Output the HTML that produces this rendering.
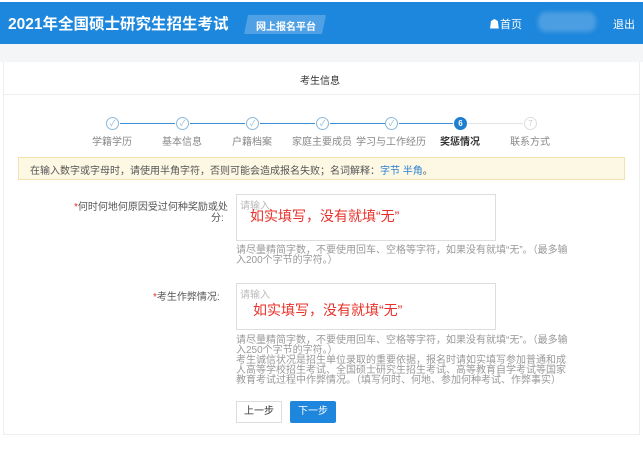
<!DOCTYPE html>
<html><head><meta charset="utf-8"><style>
*{margin:0;padding:0;box-sizing:border-box}
body{width:643px;height:451px;background:#fff;font-family:"Liberation Sans","Noto Sans CJK SC",sans-serif;position:relative;overflow:hidden}
.a{position:absolute;white-space:nowrap}
.hdr{position:absolute;left:0;top:2px;width:643px;height:42px;background:#1c87dc}
.gray{position:absolute;left:0;top:44px;width:643px;height:18px;background:#f4f5f6}
.card{position:absolute;left:3px;top:62px;width:637px;height:373px;background:#fff;border-left:1px solid #eee;border-right:1px solid #eee;border-bottom:1px solid #eee}
.circ{position:absolute;width:13px;height:13px;border-radius:50%;border:1px solid #8ab8dc;background:#fff;color:#8ab8dc;font-size:8px;text-align:center;line-height:11px}
.line{position:absolute;height:1px;background:#3a8fd8;top:123px}
.lbl{position:absolute;top:133px;font-size:10px;color:#888;transform:translateX(-50%);white-space:nowrap}
.ta{position:absolute;border:1px solid #ddd;background:#fff}
.ph{position:absolute;font-size:10px;color:#bbb}
.red{position:absolute;font-size:14px;color:#e8302a;white-space:nowrap}
.help{position:absolute;font-size:10px;color:#999;line-height:10px;width:338px}
</style></head><body>
<div class="hdr"></div>
<div class="a" style="left:8px;top:12px;font-size:15.5px;font-weight:bold;color:#fff">2021年全国硕士研究生招生考试</div>
<div class="a" style="left:246px;top:15px;width:78px;height:19px;background:#4fa0e4;transform:skewX(-12deg)"></div>
<div class="a" style="left:256px;top:18px;font-size:10px;font-weight:bold;color:#fff">网上报名平台</div>
<div class="a" style="left:489px;top:16px;font-size:11px;color:#fff">&#9751;首页</div>
<div class="a" style="left:538px;top:12px;width:58px;height:20px;border-radius:8px;background:#4c9ee2;filter:blur(2px)"></div>
<div class="a" style="left:613px;top:16px;font-size:11px;color:#fff">退出</div>
<div class="gray"></div>
<div class="card"></div>
<div class="a" style="left:300px;top:72px;font-size:10px;color:#333">考生信息</div>
<div class="a" style="left:3px;top:94px;width:637px;height:1px;background:#eee"></div>

<div class="line" style="left:120px;width:55px"></div>
<div class="line" style="left:190px;width:55px"></div>
<div class="line" style="left:260px;width:55px"></div>
<div class="line" style="left:330px;width:55px"></div>
<div class="line" style="left:399px;width:54px"></div>
<div class="line" style="left:468px;width:55px;background:#e4e4e4"></div>
<div class="circ" style="left:106px;top:117px">✓</div>
<div class="circ" style="left:176px;top:117px">✓</div>
<div class="circ" style="left:246px;top:117px">✓</div>
<div class="circ" style="left:316px;top:117px">✓</div>
<div class="circ" style="left:385px;top:117px">✓</div>
<div class="circ" style="left:454px;top:117px;background:#1e7fd0;border-color:#1e7fd0;color:#fff;font-weight:bold">6</div>
<div class="circ" style="left:524px;top:117px;border-color:#ddd;color:#ccc">7</div>
<div class="lbl" style="left:112px">学籍学历</div>
<div class="lbl" style="left:182px">基本信息</div>
<div class="lbl" style="left:252px">户籍档案</div>
<div class="lbl" style="left:322px">家庭主要成员</div>
<div class="lbl" style="left:391px">学习与工作经历</div>
<div class="lbl" style="left:460px;color:#333;font-weight:bold">奖惩情况</div>
<div class="lbl" style="left:530px">联系方式</div>

<div class="a" style="left:18px;top:157px;width:607px;height:23px;background:#fdf8e4;border:1px solid #f1e3b0"></div>
<div class="a" style="left:30px;top:162px;font-size:10px;color:#555">在输入数字或字母时，请使用半角字符，否则可能会造成报名失败；名词解释：<span style="color:#2a7fd0">字节 半角</span>。</div>

<div class="a" style="left:74px;top:198px;font-size:10px;color:#555"><span style="color:#e8302a">*</span>何时何地何原因受过何种奖励或处</div>
<div class="a" style="left:211px;top:209px;font-size:10px;color:#555">分:</div>
<div class="ta" style="left:236px;top:194px;width:260px;height:47px"></div>
<div class="ph" style="left:240px;top:197px">请输入</div>
<div class="red" style="left:250px;top:206px">如实填写，没有就填“无”</div>
<div class="help" style="left:236px;top:246px">请尽量精简字数，不要使用回车、空格等字符，如果没有就填“无”。（最多输入200个字节的字符。）</div>

<div class="a" style="left:153px;top:288px;font-size:10px;color:#555"><span style="color:#e8302a">*</span>考生作弊情况:</div>
<div class="ta" style="left:236px;top:283px;width:260px;height:47px"></div>
<div class="ph" style="left:240px;top:286px">请输入</div>
<div class="red" style="left:253px;top:300px">如实填写，没有就填“无”</div>
<div class="help" style="left:236px;top:336px">请尽量精简字数，不要使用回车、空格等字符，如果没有就填“无”。（最多输入250个字节的字符。）<br>考生诚信状况是招生单位录取的重要依据，报名时请如实填写参加普通和成人高等学校招生考试、全国硕士研究生招生考试、高等教育自学考试等国家教育考试过程中作弊情况。（填写何时、何地、参加何种考试、作弊事实）</div>

<div class="a" style="left:236px;top:401px;width:46px;height:22px;border:1px solid #ddd;font-size:10px;color:#333;text-align:center;line-height:20px">上一步</div>
<div class="a" style="left:290px;top:401px;width:46px;height:22px;background:#1e86dc;font-size:10px;color:#fff;text-align:center;line-height:22px;border-radius:2px">下一步</div>
</body></html>
